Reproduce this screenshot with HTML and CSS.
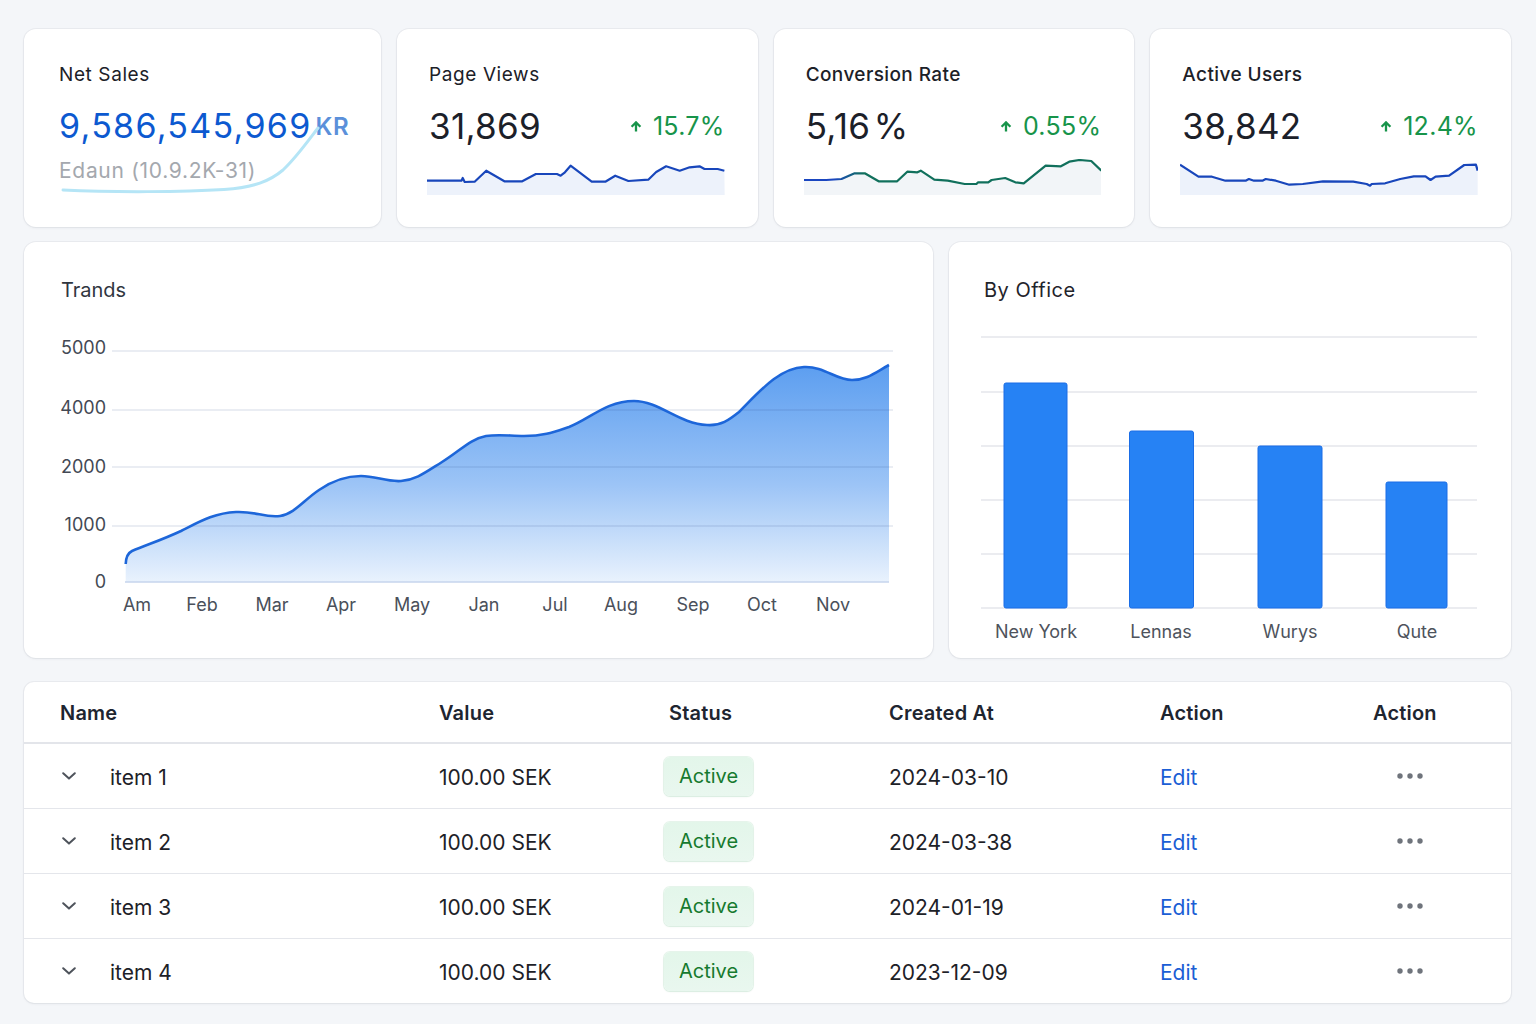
FILE: index.html
```html
<!DOCTYPE html>
<html lang="en">
<head>
<meta charset="utf-8">
<title>Dashboard</title>
<link rel="stylesheet" href="styles.css">
</head>
<body>
<div class="page">
  <section class="kpis">
    <div class="card kpi kpi-net">
      <div class="kpi-title">Net Sales</div>
      <div class="kpi-row net-row">
        <span class="net-value">9,586,545,969</span><span class="net-unit">KR</span>
      </div>
      <div class="net-sub">Edaun (10.9.2K-31)</div>
      <svg class="net-swoosh" viewBox="0 0 357 198" width="357" height="198" aria-hidden="true">
        <path d="M39,161 C90,163.5 160,163 200,160.5 C230,158.5 246,152 259,141 C272,129 284,112 294,99" fill="none" stroke="#b5e5f6" stroke-width="3" stroke-linecap="round"/>
      </svg>
    </div>

    <div class="card kpi">
      <div class="kpi-title">Page Views</div>
      <div class="kpi-row">
        <span class="kpi-value">31,869</span>
        <span class="kpi-pct"><svg class="arrow" viewBox="0 0 12 11" width="12" height="11"><path d="M6 10.5V1.8M1.6 5.8L6 1.4L10.4 5.8" fill="none" stroke="currentColor" stroke-width="2.3"/></svg>15.7%</span>
      </div>
      <svg class="spark" viewBox="0 0 300 36" preserveAspectRatio="none">
        <polygon class="spark-fill" points="0,21.7 34.7,21.7 36,19 38,23 48,22.7 59.7,11.7 78,22.3 96,22.3 109.7,15 131,15 134.7,16.7 139,13.3 144.7,6.7 166,22.7 179.7,22.7 189.7,16.7 203,22 223,20.7 231,13 241,7.3 254.7,11.7 264.7,8.3 274.7,7.3 279.7,10 293,10 299.7,11.7 300,36 0,36"/>
        <polyline class="spark-line" points="0,21.7 34.7,21.7 36,19 38,23 48,22.7 59.7,11.7 78,22.3 96,22.3 109.7,15 131,15 134.7,16.7 139,13.3 144.7,6.7 166,22.7 179.7,22.7 189.7,16.7 203,22 223,20.7 231,13 241,7.3 254.7,11.7 264.7,8.3 274.7,7.3 279.7,10 293,10 299.7,11.7"/>
      </svg>
    </div>

    <div class="card kpi">
      <div class="kpi-title medium">Conversion Rate</div>
      <div class="kpi-row">
        <span class="kpi-value">5,16&#8202;%</span>
        <span class="kpi-pct"><svg class="arrow" viewBox="0 0 12 11" width="12" height="11"><path d="M6 10.5V1.8M1.6 5.8L6 1.4L10.4 5.8" fill="none" stroke="currentColor" stroke-width="2.3"/></svg>0.55%</span>
      </div>
      <svg class="spark" viewBox="0 0 294 36" preserveAspectRatio="none">
        <defs>
          <linearGradient id="convStroke" x1="0" y1="0" x2="294" y2="0" gradientUnits="userSpaceOnUse">
            <stop offset="0" stop-color="#1a46c0"/>
            <stop offset="0.1" stop-color="#1a46c0"/>
            <stop offset="0.2" stop-color="#11705c"/>
            <stop offset="1" stop-color="#11705c"/>
          </linearGradient>
        </defs>
        <polygon class="spark-fill light" points="0,21 22,21 37,20 50,14.3 60,14.3 73.7,22.3 92,22.3 102,12.7 112,13.3 115.3,11.7 128.7,20.7 142,21.7 158.7,25 170.3,25 172,23.3 182,23.3 185.3,21 198.7,19 208.7,23.3 217,24.3 238.7,6.7 253.7,7.3 262,2.7 272,1 283.7,2 293.7,11.7 294,36 0,36"/>
        <polyline class="spark-line conv" points="0,21 22,21 37,20 50,14.3 60,14.3 73.7,22.3 92,22.3 102,12.7 112,13.3 115.3,11.7 128.7,20.7 142,21.7 158.7,25 170.3,25 172,23.3 182,23.3 185.3,21 198.7,19 208.7,23.3 217,24.3 238.7,6.7 253.7,7.3 262,2.7 272,1 283.7,2 293.7,11.7"/>
      </svg>
    </div>

    <div class="card kpi">
      <div class="kpi-title medium">Active Users</div>
      <div class="kpi-row">
        <span class="kpi-value">38,842</span>
        <span class="kpi-pct"><svg class="arrow" viewBox="0 0 12 11" width="12" height="11"><path d="M6 10.5V1.8M1.6 5.8L6 1.4L10.4 5.8" fill="none" stroke="currentColor" stroke-width="2.3"/></svg>12.4%</span>
      </div>
      <svg class="spark" viewBox="0 0 295 36" preserveAspectRatio="none">
        <polygon class="spark-fill" points="0,5.7 18.3,17.7 31.7,17.7 45,21.7 65,21.7 68.3,20 73.3,21.7 81.7,21.7 85,20 95,21.7 108.3,25.7 121.7,25 141.7,22.3 171.7,22.7 185,25 188.3,26.7 190,25 203.3,24.3 218.3,20 231.7,17.3 243.3,17.3 248.3,21 253.3,17.7 266.7,16.7 281.7,6 293.3,5.7 295,11.7 295,36 0,36"/>
        <polyline class="spark-line" points="0,5.7 18.3,17.7 31.7,17.7 45,21.7 65,21.7 68.3,20 73.3,21.7 81.7,21.7 85,20 95,21.7 108.3,25.7 121.7,25 141.7,22.3 171.7,22.7 185,25 188.3,26.7 190,25 203.3,24.3 218.3,20 231.7,17.3 243.3,17.3 248.3,21 253.3,17.7 266.7,16.7 281.7,6 293.3,5.7 295,11.7"/>
      </svg>
    </div>
  </section>

  <section class="mid">
    <div class="card chart-card">
      <div class="chart-title trends-title">Trands</div>
      <svg class="trend-svg" viewBox="0 0 909 300" width="909" height="300">
        <defs>
          <linearGradient id="areaFill" x1="0" y1="35" x2="0" y2="252" gradientUnits="userSpaceOnUse">
            <stop offset="0" stop-color="#5c9ef0"/>
            <stop offset="0.55" stop-color="#9cc4f6"/>
            <stop offset="1" stop-color="#e9f2fd"/>
          </linearGradient>
        </defs>
        <path d="M101.7,252 L101.7,234 C102,226 104,223 108,221 C125,214 140,209 157,201 C175,192 190,183 212,182 C232,181 240,188 256,186 C270,184 280,170 295,160 C308,151 322,146 337,146 C352,146 362,152 377,151 C392,150 402,142 418,132 C436,121 446,109 462,106 C475,104 486,106 500,106 C520,106 530,102 545,97 C566,89 582,71 610,71 C635,71 655,94 683,95 C697,96 705,90 715,82 C735,62 755,38 780,37 C800,36 812,50 828,50 C843,50 852,42 865,35 L865,252 Z" fill="url(#areaFill)"/>
        <g class="grid">
          <line x1="88" y1="21" x2="869" y2="21"/>
          <line x1="88" y1="80" x2="869" y2="80"/>
          <line x1="88" y1="137" x2="869" y2="137"/>
          <line x1="88" y1="196" x2="869" y2="196"/>
        </g>
        <line class="baseline" x1="101" y1="252" x2="865" y2="252"/>
        <path d="M101.7,234 C102,226 104,223 108,221 C125,214 140,209 157,201 C175,192 190,183 212,182 C232,181 240,188 256,186 C270,184 280,170 295,160 C308,151 322,146 337,146 C352,146 362,152 377,151 C392,150 402,142 418,132 C436,121 446,109 462,106 C475,104 486,106 500,106 C520,106 530,102 545,97 C566,89 582,71 610,71 C635,71 655,94 683,95 C697,96 705,90 715,82 C735,62 755,38 780,37 C800,36 812,50 828,50 C843,50 852,42 865,35" fill="none" stroke="#1d66d9" stroke-width="2.6" stroke-linejoin="round"/>
        <g class="ylab">
          <text x="82" y="24">5000</text>
          <text x="82" y="84">4000</text>
          <text x="82" y="143">2000</text>
          <text x="82" y="201">1000</text>
          <text x="82" y="258">0</text>
        </g>
        <g class="xlab">
          <text x="113" y="281">Am</text>
          <text x="178" y="281">Feb</text>
          <text x="248" y="281">Mar</text>
          <text x="317" y="281">Apr</text>
          <text x="388" y="281">May</text>
          <text x="460" y="281">Jan</text>
          <text x="531" y="281">Jul</text>
          <text x="597" y="281">Aug</text>
          <text x="669" y="281">Sep</text>
          <text x="738" y="281">Oct</text>
          <text x="809" y="281">Nov</text>
        </g>
      </svg>
    </div>

    <div class="card chart-card">
      <div class="chart-title office-title">By Office</div>
      <svg class="office-svg" viewBox="0 0 562 330" width="562" height="330">
        <g class="ogrid">
          <line x1="32" y1="17" x2="528" y2="17"/>
          <line x1="32" y1="72" x2="528" y2="72"/>
          <line x1="32" y1="126" x2="528" y2="126"/>
          <line x1="32" y1="180" x2="528" y2="180"/>
          <line x1="32" y1="234" x2="528" y2="234"/>
          <line x1="32" y1="288" x2="528" y2="288"/>
        </g>
        <g class="bars">
          <rect x="55" y="63" width="63" height="225" rx="2"/>
          <rect x="180.5" y="111" width="64" height="177" rx="2"/>
          <rect x="309" y="126" width="64" height="162" rx="2"/>
          <rect x="437" y="162" width="61" height="126" rx="2"/>
        </g>
        <g class="olab">
          <text x="87" y="318">New York</text>
          <text x="212" y="318">Lennas</text>
          <text x="341" y="318">Wurys</text>
          <text x="468" y="318">Qute</text>
        </g>
      </svg>
    </div>
  </section>

  <section class="card table-card">
    <div class="tr thead">
      <div>Name</div>
      <div>Value</div>
      <div class="th-status">Status</div>
      <div>Created At</div>
      <div>Action</div>
      <div>Action</div>
    </div>
    <div class="tr">
      <div class="name-cell"><svg class="chev" viewBox="0 0 14 8" width="14" height="8"><path d="M1.2 1.2L7 6.6L12.8 1.2" fill="none" stroke="currentColor" stroke-width="2" stroke-linecap="round" stroke-linejoin="round"/></svg><span>item 1</span></div>
      <div>100.00 SEK</div>
      <div><span class="badge">Active</span></div>
      <div>2024-03-10</div>
      <div><a class="edit">Edit</a></div>
      <div class="more"><svg viewBox="0 0 26 6" width="26" height="6"><circle cx="3" cy="3" r="2.7"/><circle cx="13" cy="3" r="2.7"/><circle cx="23" cy="3" r="2.7"/></svg></div>
    </div>
    <div class="tr">
      <div class="name-cell"><svg class="chev" viewBox="0 0 14 8" width="14" height="8"><path d="M1.2 1.2L7 6.6L12.8 1.2" fill="none" stroke="currentColor" stroke-width="2" stroke-linecap="round" stroke-linejoin="round"/></svg><span>item 2</span></div>
      <div>100.00 SEK</div>
      <div><span class="badge">Active</span></div>
      <div>2024-03-38</div>
      <div><a class="edit">Edit</a></div>
      <div class="more"><svg viewBox="0 0 26 6" width="26" height="6"><circle cx="3" cy="3" r="2.7"/><circle cx="13" cy="3" r="2.7"/><circle cx="23" cy="3" r="2.7"/></svg></div>
    </div>
    <div class="tr">
      <div class="name-cell"><svg class="chev" viewBox="0 0 14 8" width="14" height="8"><path d="M1.2 1.2L7 6.6L12.8 1.2" fill="none" stroke="currentColor" stroke-width="2" stroke-linecap="round" stroke-linejoin="round"/></svg><span>item 3</span></div>
      <div>100.00 SEK</div>
      <div><span class="badge">Active</span></div>
      <div>2024-01-19</div>
      <div><a class="edit">Edit</a></div>
      <div class="more"><svg viewBox="0 0 26 6" width="26" height="6"><circle cx="3" cy="3" r="2.7"/><circle cx="13" cy="3" r="2.7"/><circle cx="23" cy="3" r="2.7"/></svg></div>
    </div>
    <div class="tr">
      <div class="name-cell"><svg class="chev" viewBox="0 0 14 8" width="14" height="8"><path d="M1.2 1.2L7 6.6L12.8 1.2" fill="none" stroke="currentColor" stroke-width="2" stroke-linecap="round" stroke-linejoin="round"/></svg><span>item 4</span></div>
      <div>100.00 SEK</div>
      <div><span class="badge">Active</span></div>
      <div>2023-12-09</div>
      <div><a class="edit">Edit</a></div>
      <div class="more"><svg viewBox="0 0 26 6" width="26" height="6"><circle cx="3" cy="3" r="2.7"/><circle cx="13" cy="3" r="2.7"/><circle cx="23" cy="3" r="2.7"/></svg></div>
    </div>
  </section>
</div>
</body>
</html>
```

FILE: styles.css
```css
* { box-sizing: border-box; }

html, body {
  margin: 0;
  padding: 0;
  background: #f4f6f9;
}

body {
  font-family: Inter, "Noto Sans", "Liberation Sans", sans-serif;
  color: #1f2329;
  width: 1536px;
  height: 1024px;
  overflow: hidden;
}

.page {
  padding: 29px 25px 0 24px;
}

.card {
  background: #ffffff;
  border-radius: 12px;
  box-shadow: 0 0 0 1px rgba(20, 30, 50, 0.045), 0 1px 3px rgba(20, 30, 50, 0.06);
}

/* KPI row */
.kpis {
  display: grid;
  grid-template-columns: 357px 1fr 1fr 1fr;
  gap: 16px;
  height: 198px;
}

.kpi {
  position: relative;
  padding: 34px 33px 0 32px;
  display: flex;
  flex-direction: column;
}

.kpi-net {
  padding-left: 35px;
}

.kpi-title {
  font-size: 19px;
  line-height: 24px;
  letter-spacing: 0.6px;
  color: #1c2128;
}

.kpi-title.medium {
  font-weight: 500;
  letter-spacing: 0.4px;
}

.kpi-row {
  margin-top: 19px;
  height: 40px;
  display: flex;
  align-items: center;
  justify-content: space-between;
}

.net-row {
  justify-content: flex-start;
}

.kpi-value {
  font-size: 35px;
  line-height: 40px;
  color: #1b2029;
  letter-spacing: 0.3px;
}

.net-value {
  font-size: 34px;
  line-height: 40px;
  color: #0c59d0;
  letter-spacing: 1.3px;
}

.net-unit {
  font-size: 24px;
  font-weight: 600;
  color: #5b90da;
  margin-left: 4px;
  margin-top: 1px;
  letter-spacing: 0.5px;
}

.net-sub {
  margin-top: 11px;
  font-size: 21px;
  line-height: 28px;
  letter-spacing: 0.7px;
  color: #a4a8ae;
}

.net-swoosh {
  position: absolute;
  left: 0;
  top: 0;
  pointer-events: none;
}

.kpi-pct {
  display: flex;
  align-items: center;
  gap: 11px;
  font-size: 25px;
  color: #17944a;
  letter-spacing: 0.3px;
}

.arrow {
  display: block;
  color: #17944a;
}

.spark {
  display: block;
  margin-top: 13px;
  margin-left: -2px;
  width: calc(100% + 2px);
  height: 36px;
}

.spark-fill {
  fill: #edf2fb;
}

.spark-fill.light {
  fill: #f2f5f8;
}

.spark-line {
  fill: none;
  stroke: #1846bb;
  stroke-width: 2.2;
  stroke-linejoin: round;
}

.spark-line.conv {
  stroke: url(#convStroke);
}

/* middle row */
.mid {
  margin-top: 15px;
  display: grid;
  grid-template-columns: 1fr 562px;
  gap: 16px;
  height: 416px;
}

.chart-card {
  padding-top: 34px;
  display: flex;
  flex-direction: column;
  overflow: hidden;
}

.chart-title {
  font-size: 20px;
  line-height: 28px;
  color: #30363f;
}

.trends-title {
  margin-left: 37px;
}

.office-title {
  margin-left: 35px;
  letter-spacing: 0.5px;
  color: #1f242b;
}

.trend-svg {
  display: block;
  margin-top: 26px;
}

.office-svg {
  display: block;
  margin-top: 16px;
}

.grid line {
  stroke: rgba(40, 70, 130, 0.13);
  stroke-width: 1.3;
}

.baseline {
  stroke: #c6d4ec;
  stroke-width: 1.3;
}

.ylab text {
  font-family: Inter, "Noto Sans", "Liberation Sans", sans-serif;
  font-size: 18px;
  fill: #434954;
  text-anchor: end;
}

.xlab text {
  font-family: Inter, "Noto Sans", "Liberation Sans", sans-serif;
  font-size: 18px;
  fill: #4a505a;
  text-anchor: middle;
}

.ogrid line {
  stroke: #e4e6eb;
  stroke-width: 1.3;
}

.bars rect {
  fill: #2682f4;
  stroke: #1a6de6;
  stroke-width: 1;
}

.olab text {
  font-family: Inter, "Noto Sans", "Liberation Sans", sans-serif;
  font-size: 18px;
  fill: #4e535c;
  text-anchor: middle;
}

/* table */
.table-card {
  margin-top: 24px;
  border-radius: 10px;
  overflow: hidden;
}

.tr {
  display: grid;
  grid-template-columns: 379px 225px 225px 271px 213px 1fr;
  align-items: center;
  padding-left: 36px;
  height: 65px;
  border-top: 1px solid #e4e6eb;
  font-size: 21px;
  color: #1d2127;
  padding-top: 2px;
}

.tr.thead {
  height: 62px;
  border-top: none;
  border-bottom: 2px solid #e3e5ea;
  font-size: 20px;
  font-weight: 600;
  letter-spacing: 0.2px;
  color: #1e2530;
}

.tr.thead + .tr {
  border-top: none;
  height: 64px;
}

.th-status {
  padding-left: 5px;
}

.name-cell {
  display: flex;
  align-items: center;
}

.chev {
  display: block;
  color: #4f545c;
  margin-left: 2px;
  margin-right: 34px;
  margin-top: -2px;
}

.badge {
  display: inline-block;
  width: 89px;
  height: 39px;
  line-height: 39px;
  text-align: center;
  border-radius: 6px;
  background: linear-gradient(#e3f6ea, #e9f7ef);
  box-shadow: 0 0 0 1px rgba(120, 200, 150, 0.18), 0 1px 2px rgba(30, 120, 60, 0.08);
  color: #167a2f;
  font-size: 20px;
  vertical-align: middle;
  margin-top: -2px;
}

.edit {
  color: #1b5ed5;
  text-decoration: none;
}

.more {
  padding-left: 24px;
}

.more svg {
  display: block;
  fill: #6f747c;
  margin-top: -2px;
}
```
